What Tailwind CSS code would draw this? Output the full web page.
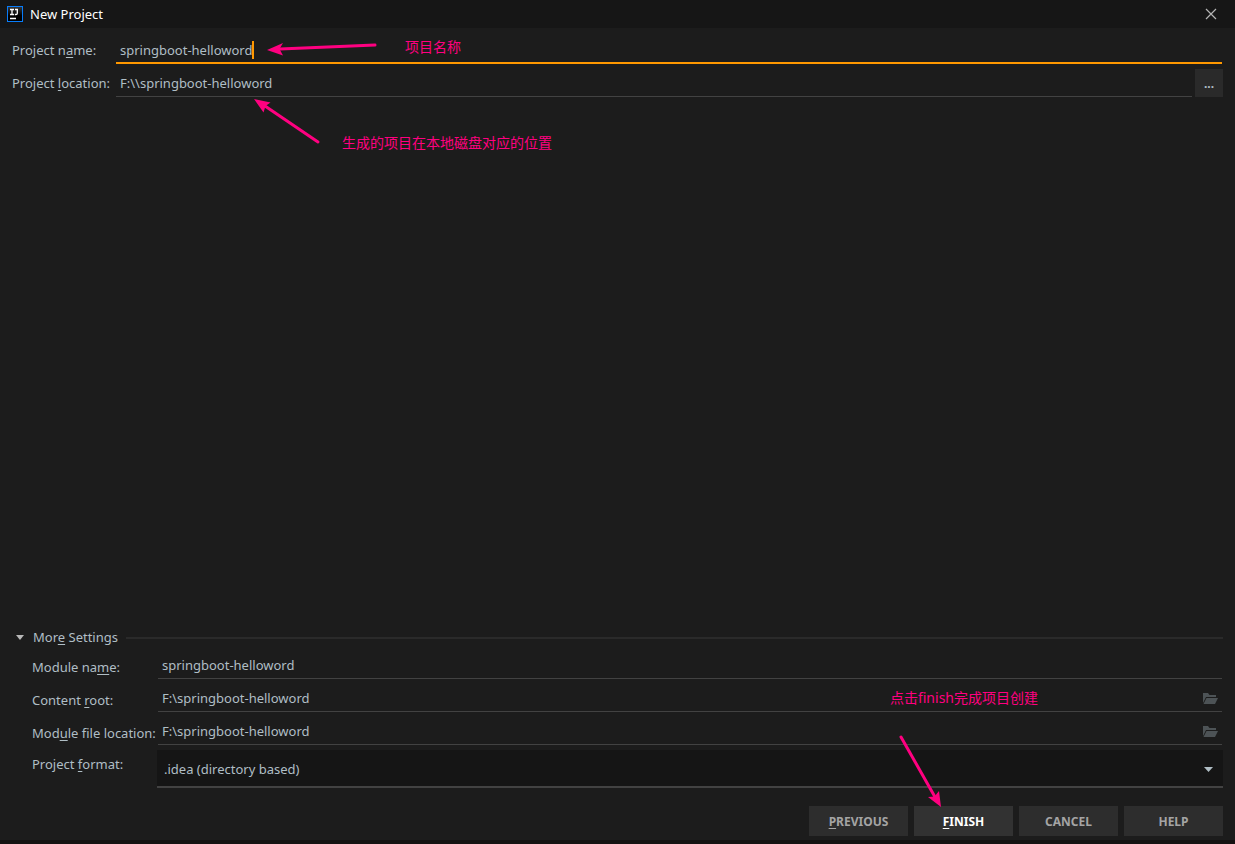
<!DOCTYPE html>
<html lang="zh-CN">
<head>
<meta charset="utf-8">
<meta name="viewport" content="width=device-width, initial-scale=1">
<title>New Project</title>
<script src="https://cdn.jsdelivr.net/npm/@tailwindcss/browser@4"></script>
</head>
<body class="bg-[#1c1c1c] font-['Noto_Sans','Noto_Sans_CJK_SC',sans-serif] text-[13px] leading-5 text-[#b0bec5]">
<div class="relative flex min-h-screen flex-col border-b-4 border-[#151212]">
  <header class="flex h-7 shrink-0 items-center bg-[#161616] pr-[18px] pl-[7px] text-white">
    <svg class="mr-[7px] size-4" viewBox="0 0 16 16" aria-hidden="true">
      <defs><linearGradient id="tile" x2="0" y2="1"><stop stop-color="#3a3a3a"/><stop offset=".6" stop-color="#000"/></linearGradient></defs>
      <rect x=".5" y=".5" width="15" height="15" fill="url(#tile)" stroke="#087cfa"/>
      <path d="M3 3.500h4M5 3.500v5M3 8.500h4M8 3.500h3M10.300 3.500v3.700q0 1.300-1.300 1.300H7.800M3 12.500h6" fill="none" stroke="#fff" stroke-width="1.300"/>
    </svg>
    <h1>New Project</h1>
    <button type="button" aria-label="Close" class="ml-auto size-3">
      <svg class="size-3" viewBox="0 0 12 12"><path d="M1 1l10 10M11 1L1 11" stroke="#b4b4b4" stroke-width="1.200"/></svg>
    </button>
  </header>

  <main class="flex flex-1 flex-col pr-3 pl-3">
    <div class="mt-2 mr-px flex h-7 items-stretch">
      <label for="name" class="w-[104px] shrink-0 pt-1">Project n<u class="underline-offset-2">a</u>me:</label>
      <div class="relative flex-1">
        <input id="name" value="springboot-helloword" class="h-7 w-full border-b-2 border-[#ff9800] px-1 pt-0.5 outline-none">
        <span class="absolute top-[5px] left-[136px] h-[18px] w-0.5 bg-[#ff9800]"></span>
      </div>
    </div>
    <div class="mt-[5px] flex h-7">
      <label for="location" class="w-[104px] shrink-0 pt-1">Project <u class="underline-offset-2">l</u>ocation:</label>
      <input id="location" value="F:\\springboot-helloword" class="mr-[3px] min-w-0 flex-1 border-b border-[#424242] px-1 outline-none">
      <button type="button" aria-label="Browse" class="w-7 bg-[#2a2a2a] pt-0.5 text-[12px] font-bold">...</button>
    </div>

    <section class="mt-auto">
      <div class="flex h-5 items-center">
        <button type="button" class="flex items-center pl-1">
          <svg class="mr-[9px] h-[5px] w-2" viewBox="0 0 8 5"><path d="M0 0h8L4 5z" fill="#b8b8b8"/></svg>
          <span>Mor<u class="underline-offset-2">e</u> Settings</span>
        </button>
        <span class="mt-0.5 ml-2 h-0.5 flex-1 bg-[#2a2a2a]"></span>
      </div>
      <div class="mt-[5px] mr-px flex h-[27px]">
        <label for="module" class="w-[146px] shrink-0 pt-[5px] pl-5 whitespace-nowrap">Module na<u class="underline-offset-2">m</u>e:</label>
        <input id="module" value="springboot-helloword" class="min-w-0 flex-1 border-b border-[#424242] px-1 outline-none">
      </div>
      <div class="mt-1.5 mr-px flex h-[27px]">
        <label for="root" class="w-[146px] shrink-0 pt-[5px] pl-5 whitespace-nowrap">Content <u class="underline-offset-2">r</u>oot:</label>
        <div class="flex flex-1 items-center border-b border-[#424242] pr-1">
          <input id="root" value="F:\springboot-helloword" class="min-w-0 flex-1 px-1 outline-none">
          <button type="button" aria-label="Browse content root" class="pt-0.5"><svg class="h-3 w-4" viewBox="0 0 16 12"><path d="M1 11V0h5l1.500 2H14v2H4L1 10z" fill="#4d5356"/><path d="M4.500 5H16l-3 6H1.500z" fill="#4d5356"/></svg></button>
        </div>
      </div>
      <div class="mt-1.5 mr-px flex h-[27px]">
        <label for="file" class="w-[146px] shrink-0 pt-[5px] pl-5 whitespace-nowrap">Mod<u class="underline-offset-2">u</u>le file location:</label>
        <div class="flex flex-1 items-center border-b border-[#424242] pr-1">
          <input id="file" value="F:\springboot-helloword" class="min-w-0 flex-1 px-1 outline-none">
          <button type="button" aria-label="Browse module file location" class="pt-0.5"><svg class="h-3 w-4" viewBox="0 0 16 12"><path d="M1 11V0h5l1.500 2H14v2H4L1 10z" fill="#4d5356"/><path d="M4.500 5H16l-3 6H1.500z" fill="#4d5356"/></svg></button>
        </div>
      </div>
      <div class="mt-[5px] flex h-[38px]">
        <label for="format" class="w-[145px] shrink-0 pt-1 pl-5 whitespace-nowrap">Project <u class="underline-offset-2">f</u>ormat:</label>
        <div class="relative flex-1">
          <select id="format" class="h-full w-full appearance-none border-b-2 border-[#424242] bg-[#151515] px-[7px] pt-0.5 outline-none"><option>.idea (directory based)</option></select>
          <svg class="pointer-events-none absolute top-[17px] right-[10px] h-[5px] w-[9px]" viewBox="0 0 9 5"><path d="M0 0h9L4.500 5z" fill="#b0bec5"/></svg>
        </div>
      </div>
    </section>

    <footer class="mt-[18px] mb-1 flex h-[30px] justify-end gap-1.5 text-[12px] font-bold text-[#a4a4a4]">
      <button type="button" class="w-[99px] bg-[#2d2d2d] pt-0.5"><u class="underline-offset-2">P</u>REVIOUS</button>
      <button type="button" class="w-[99px] bg-[#323232] pt-0.5 text-white"><u class="underline-offset-2">F</u>INISH</button>
      <button type="button" class="w-[99px] bg-[#2d2d2d] pt-0.5">CANCEL</button>
      <button type="button" class="w-[99px] bg-[#2d2d2d] pt-0.5">HELP</button>
    </footer>
  </main>

  <!-- Hand-drawn notes over the dialog -->
  <div class="pointer-events-none absolute inset-0 text-[14px] text-[#ff0080]">
    <svg class="absolute top-0 left-0 h-[160px] w-[400px]" viewBox="0 0 400 160" fill="#ff0080" stroke="#ff0080" stroke-width="3" stroke-linecap="round">
      <path d="M375 45L280 49M318 142L265 106"/>
      <path stroke="none" d="M267 50L283 43L279.500 49L283 55.500zM254 99L270.500 102.500L265.500 106L263.500 112.500z"/>
    </svg>
    <p class="absolute top-[37px] left-[405px]">项目名称</p>
    <p class="absolute top-[133px] left-[342px]">生成的项目在本地磁盘对应的位置</p>
    <p class="absolute right-[197px] bottom-[132px]">点击finish完成项目创建</p>
    <svg class="absolute right-[285px] bottom-[32px] h-[80px] w-[60px]" viewBox="890 728 60 80" fill="#ff0080" stroke="#ff0080" stroke-width="3" stroke-linecap="round">
      <path d="M901 737L935 797"/>
      <path stroke="none" d="M941 807L928 797L934.500 796.500L939 791z"/>
    </svg>
  </div>
</div>
</body>
</html>
